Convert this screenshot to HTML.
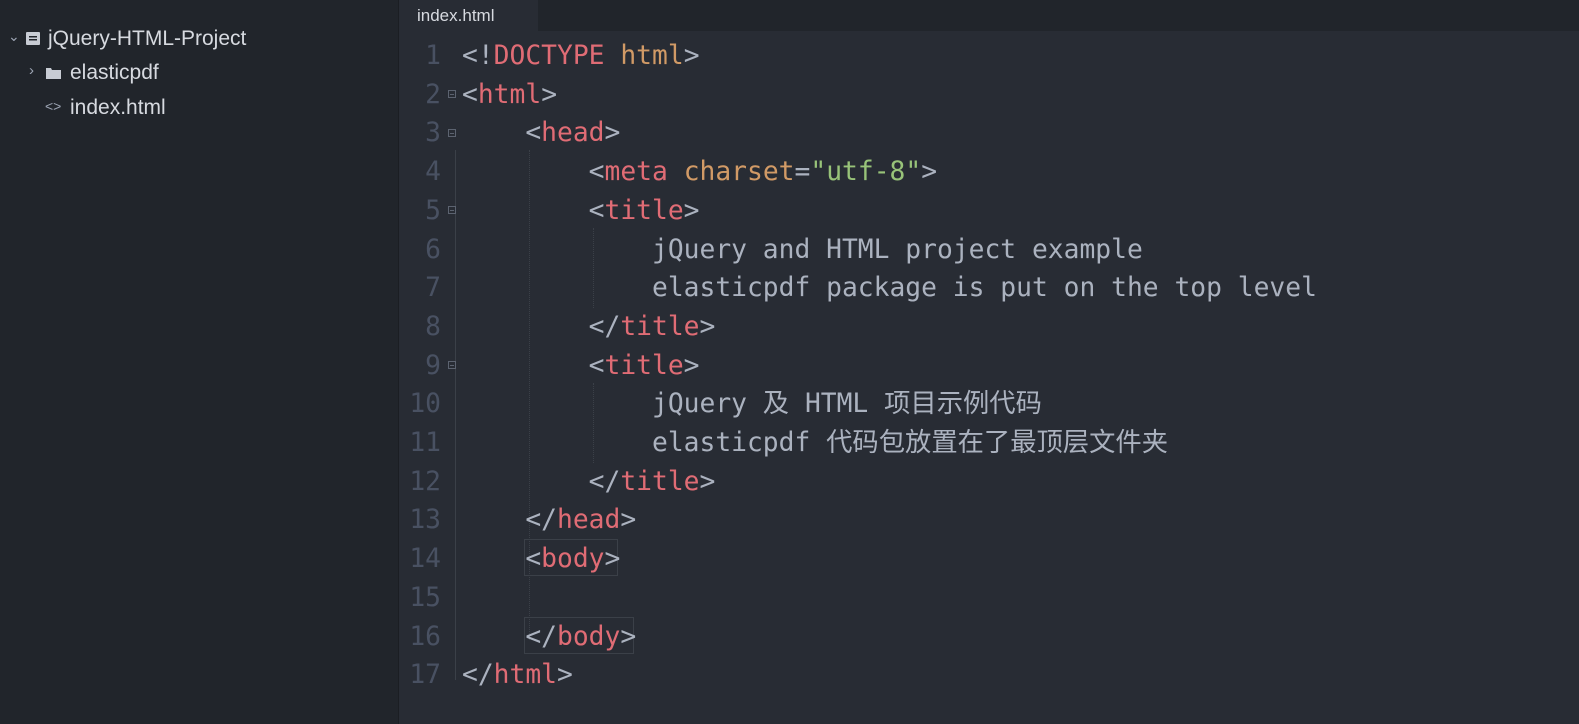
<!DOCTYPE html>
<html><head><style>
html,body{margin:0;width:1579px;height:724px;background:#282c34;overflow:hidden;position:relative;font-family:"Liberation Sans",sans-serif}
#side{position:absolute;left:0;top:0;width:398px;height:724px;background:#21252b;border-right:1px solid #1b1e23}
.it{position:absolute;color:#d7dae0;font-size:21px;white-space:nowrap}
#tabbar{position:absolute;left:399px;top:0;right:0;height:31px;background:#21252b}
#tab{position:absolute;left:399px;top:0;width:139px;height:31px;background:#282c34;color:#d7dae0;font-size:17px;line-height:31px;padding-left:18px;box-sizing:border-box}
.code{position:absolute;left:0;top:37px;font-family:"DejaVu Sans Mono","Noto Sans CJK SC",monospace;font-size:26.3px;line-height:38.7px;white-space:pre}
.ln{position:absolute;left:400px;top:0;width:41px;text-align:right;color:#495162}
.tx{position:absolute;left:462px;top:0;color:#abb2bf}
.t{color:#e06c75}.a{color:#d19a66}.s{color:#98c379}
.g{position:absolute;border-left:1px dotted #3b4048}
.fold{position:absolute;left:448px;width:8px;height:8px;border:1px solid #5c6370;box-sizing:border-box}
.fold:after{content:"";position:absolute;left:1px;top:2.5px;width:4px;height:1px;background:#5c6370}
</style></head><body>
<div id="side">
<div class="it" style="left:8px;top:28px;color:#9da5b4;font-size:14px">&#x2304;</div>
<svg style="position:absolute;left:26px;top:32px" width="14" height="13"><rect x="0" y="0" width="14" height="13" rx="1" fill="#c8ccd4"/><rect x="3" y="4" width="8" height="1.5" fill="#21252b"/><rect x="3" y="7" width="8" height="1.5" fill="#21252b"/></svg>
<div class="it" style="left:48px;top:27px">jQuery-HTML-Project</div>
<div class="it" style="left:29px;top:62px;color:#9da5b4;font-size:15px">›</div>
<svg style="position:absolute;left:46px;top:67px" width="15" height="12"><path d="M0 1h5l1 2h9v9H0z" fill="#c8ccd4"/></svg>
<div class="it" style="left:70px;top:61px">elasticpdf</div>
<div class="it" style="left:45px;top:98px;font-size:14px;color:#9da5b4">&lt;&gt;</div>
<div class="it" style="left:70px;top:96px">index.html</div>
</div>
<div id="tabbar"></div>
<div id="tab">index.html</div>
<div style="position:absolute;left:455px;top:150px;height:530px;border-left:1px solid #3b4048"></div>
<div class="g" style="left:529px;top:150px;height:490px"></div>
<div class="g" style="left:593px;top:228px;height:80px"></div>
<div class="g" style="left:593px;top:383px;height:80px"></div>
<div style="position:absolute;left:524px;top:539px;width:94px;height:37px;border:1px solid #3b4048;box-sizing:border-box"></div>
<div style="position:absolute;left:524px;top:617px;width:110px;height:37px;border:1px solid #3b4048;box-sizing:border-box"></div>
<div class="fold" style="top:90px"></div>
<div class="fold" style="top:129px"></div>
<div class="fold" style="top:206px"></div>
<div class="fold" style="top:361px"></div>
<div class="code"><div class="ln">1
2
3
4
5
6
7
8
9
10
11
12
13
14
15
16
17</div><div class="tx">&lt;!<span class="t">DOCTYPE</span> <span class="a">html</span>&gt;
&lt;<span class="t">html</span>&gt;
    &lt;<span class="t">head</span>&gt;
        &lt;<span class="t">meta</span> <span class="a">charset</span>=<span class="s">"utf-8"</span>&gt;
        &lt;<span class="t">title</span>&gt;
            jQuery and HTML project example
            elasticpdf package is put on the top level
        &lt;/<span class="t">title</span>&gt;
        &lt;<span class="t">title</span>&gt;
            jQuery 及 HTML 项目示例代码
            elasticpdf 代码包放置在了最顶层文件夹
        &lt;/<span class="t">title</span>&gt;
    &lt;/<span class="t">head</span>&gt;
    &lt;<span class="t">body</span>&gt;

    &lt;/<span class="t">body</span>&gt;
&lt;/<span class="t">html</span>&gt;</div></div>
</body></html>
